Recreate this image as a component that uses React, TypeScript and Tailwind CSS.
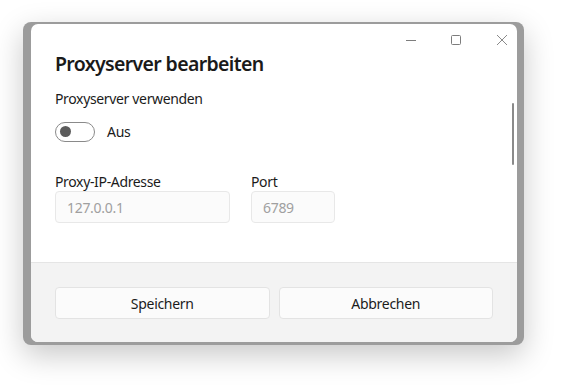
const font = { fontFamily: '"Noto Sans", "Liberation Sans", sans-serif' };

const Field = ({ label, value, width }: { label: string; value: string; width: string }) => (
  <div className="flex flex-col">
    <span className="text-[14px] leading-[18px] tracking-[-0.35px] text-[#1b1b1b]">{label}</span>
    <div className={`${width} h-[32px] flex items-center pl-[11px] rounded-[4px] border border-[#e8e8e8] bg-[#fbfbfb] text-[14px] tracking-[-0.3px] text-[#a0a0a0]`}>
      {value}
    </div>
  </div>
);

export default function App() {
  return (
    <div className="w-[562px] h-[388px] bg-white pl-[23px] pt-[22px]" style={font}>
      <div className="w-[501px] h-[323px] rounded-[8px] bg-[#9c9c9c] pl-[8px] pr-[7px] pt-[2px] pb-[3px] shadow-[0_10px_30px_rgba(0,0,0,0.22)]">
        <div className="relative h-full rounded-[7px] overflow-hidden bg-white flex flex-col">
          <div className="h-[26px] flex justify-end items-start pt-[11px] pr-[10px] text-[#7d7d7d]">
            <svg width="10" height="10" viewBox="0 0 10 10" fill="none" stroke="currentColor" strokeWidth="1">
              <path d="M0 5.5h10" />
            </svg>
            <svg className="ml-[35px]" width="10" height="10" viewBox="0 0 10 10" fill="none" stroke="currentColor" strokeWidth="1">
              <rect x="0.5" y="0.5" width="9" height="9" rx="1" />
            </svg>
            <svg className="ml-[36px]" width="10" height="10" viewBox="0 0 10 10" fill="none" stroke="currentColor" strokeWidth="0.9">
              <path d="M0 0l10 10M10 0L0 10" />
            </svg>
          </div>
          <div className="flex-1 px-[24px]">
            <h1 className="text-[19.5px] leading-[28px] font-semibold tracking-[-0.65px] text-[#1a1a1a]">Proxyserver bearbeiten</h1>
            <p className="mt-[11px] text-[14px] leading-[20px] tracking-[-0.35px] text-[#1b1b1b]">Proxyserver verwenden</p>
            <div className="mt-[12px] flex items-center gap-[12px]">
              <div className="w-[40px] h-[20px] rounded-full border border-[#8a8a8a] flex items-center pl-[4px]">
                <div className="w-[11px] h-[11px] rounded-full bg-[#5c5c5c]" />
              </div>
              <span className="text-[14px] tracking-[-0.3px] text-[#1b1b1b]">Aus</span>
            </div>
            <div className="mt-[31px] flex gap-[21px]">
              <Field label="Proxy-IP-Adresse" value="127.0.0.1" width="w-[175px]" />
              <Field label="Port" value="6789" width="w-[84px]" />
            </div>
          </div>
          <div className="absolute right-[3px] top-[79px] w-[2px] h-[62px] rounded-full bg-[#8a8a8a]" />
          <div className="h-[80px] shrink-0 border-t border-[#e5e5e5] bg-[#f3f3f3] px-[24px] pt-[24px] flex gap-[9px]">
            <button className="flex-1 h-[32px] rounded-[4px] border border-[#e3e3e3] bg-[#fbfbfb] text-[14px] tracking-[-0.3px] text-[#1b1b1b]">Speichern</button>
            <button className="flex-1 h-[32px] rounded-[4px] border border-[#e3e3e3] bg-[#fbfbfb] text-[14px] tracking-[-0.3px] text-[#1b1b1b]">Abbrechen</button>
          </div>
        </div>
      </div>
    </div>
  );
}
